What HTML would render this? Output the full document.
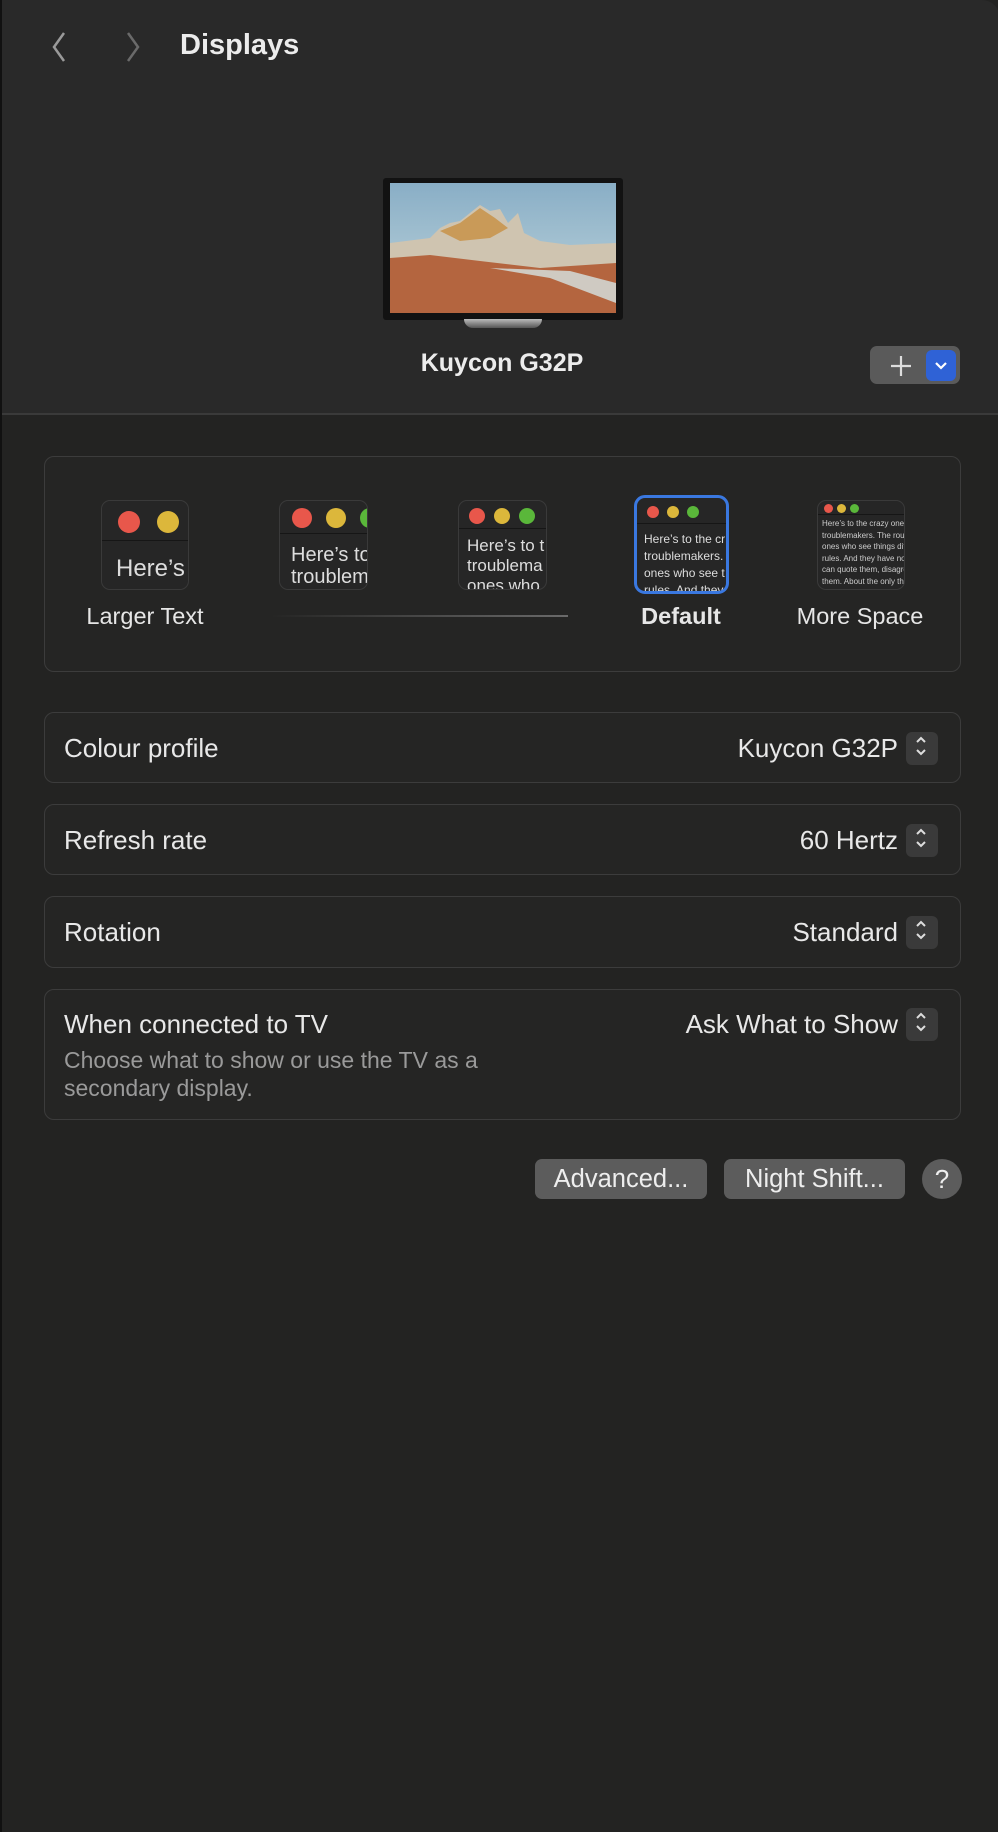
<!DOCTYPE html>
<html><head><meta charset="utf-8"><style>
*{box-sizing:border-box;margin:0;padding:0}
body{width:998px;height:1832px;background:#232322;font-family:"Liberation Sans",sans-serif;color:#e6e6e6;position:relative;overflow:hidden;border-left:2px solid #111}
.hdr{position:absolute;left:0;top:0;width:998px;height:415px;background:#292929;border-bottom:2px solid #3a3a3a;border-top-right-radius:18px}
.abs{position:absolute}
.card{position:absolute;left:42px;width:917px;border:1.5px solid #3c3c3c;border-radius:10px;background:#252524}
.lbl{position:absolute;left:19px;font-size:26px;color:#e8e8e8}
.val{position:absolute;right:62px;font-size:26px;color:#e8e8e8}
.step{position:absolute;right:22px;width:32px;height:33px;background:#3a3a3a;border-radius:6px}
.btn{position:absolute;top:1159px;height:40px;background:#5c5c5c;border-radius:7px;font-size:25.5px;color:#eee;text-align:center;line-height:40px}
.th{position:absolute;background:#262626;border:1px solid #3a3a3a;border-radius:9px;overflow:hidden}
.dot{position:absolute;border-radius:50%}
.tl{position:absolute;font-size:23.5px;color:#e6e6e6;text-align:center;width:180px;top:603px}
</style></head><body>
<div class="hdr"></div>
<svg class="abs" style="left:44px;top:30px" width="100" height="34"><path d="M18 3 L8 17 L18 31" stroke="#9a9a9a" stroke-width="2.5" fill="none"/><path d="M82 3 L92 17 L82 31" stroke="#6a6a6a" stroke-width="2.5" fill="none"/></svg>
<div class="abs" style="left:178px;top:29px;font-size:29px;font-weight:bold;color:#ececec">Displays</div>
<div class="abs" style="left:381px;top:178px;width:240px;height:142px;background:#121212;border-radius:3px"></div>
<svg class="abs" style="left:388px;top:183px" width="226" height="130" viewBox="0 0 226 130">
<defs><linearGradient id="sk" x1="0" y1="0" x2="0" y2="1"><stop offset="0" stop-color="#89aec6"/><stop offset="1" stop-color="#c0d6dc"/></linearGradient></defs>
<rect width="226" height="130" fill="url(#sk)"/>
<path d="M0 60 L40 55 L50 45 L60 40 L70 38 L80 30 L90 22 L100 28 L110 26 L118 40 L128 30 L134 50 L150 58 L180 62 L226 60 L226 130 L0 130 Z" fill="#cfc4b0"/>
<path d="M50 48 L70 40 L90 25 L105 35 L118 45 L100 55 L70 58 Z" fill="#c99a58"/>
<path d="M0 75 L40 72 L90 78 L150 85 L226 80 L226 130 L0 130 Z" fill="#b4653f"/>
<path d="M100 85 L160 95 L226 120 L226 100 L180 88 Z" fill="#cfcac2"/>
</svg>
<div class="abs" style="left:462px;top:319px;width:78px;height:9px;background:linear-gradient(#bbb,#555);border-radius:0 0 40px 40px"></div>
<div class="abs" style="left:380px;top:349px;width:240px;text-align:center;font-size:25px;font-weight:bold;color:#ececec">Kuycon G32P</div>
<div class="abs" style="left:868px;top:346px;width:90px;height:38px;background:#5a5a5a;border-radius:7px"></div>
<svg class="abs" style="left:884px;top:354px" width="30" height="24"><path d="M15 2 V22 M5 12 H25" stroke="#ddd" stroke-width="2.2"/></svg>
<div class="abs" style="left:924px;top:350px;width:30px;height:31px;background:#2f62d6;border-radius:6px"></div>
<svg class="abs" style="left:924px;top:350px" width="30" height="31"><path d="M10 13 L15 18 L20 13" stroke="#fff" stroke-width="2.2" fill="none"/></svg>

<div class="card" style="top:456px;height:216px"></div>
<div class="th" style="left:99px;top:500px;width:88px;height:90px"><div class="abs" style="left:0;top:0;width:88px;height:40px;border-bottom:1px solid #161616"></div><div class="dot" style="left:16px;top:10px;width:22px;height:22px;background:#e8574b"></div><div class="dot" style="left:55px;top:10px;width:22px;height:22px;background:#dcb73b"></div><div class="abs" style="left:14px;top:54px;font-size:24px;color:#ddd;white-space:nowrap">Here’s</div></div>
<div class="th" style="left:277px;top:500px;width:89px;height:90px"><div class="abs" style="left:0;top:0;width:89px;height:33px;border-bottom:1px solid #161616"></div><div class="dot" style="left:12px;top:7px;width:20px;height:20px;background:#e8574b"></div><div class="dot" style="left:46px;top:7px;width:20px;height:20px;background:#dcb73b"></div><div class="dot" style="left:80px;top:7px;width:20px;height:20px;background:#5ab73a"></div><div class="abs" style="left:11px;top:43px;font-size:20px;line-height:22px;color:#ddd;white-space:nowrap">Here’s to<br>troublem</div></div>
<div class="th" style="left:456px;top:500px;width:89px;height:90px"><div class="abs" style="left:0;top:0;width:89px;height:28px;border-bottom:1px solid #161616"></div><div class="dot" style="left:10px;top:7px;width:16px;height:16px;background:#e8574b"></div><div class="dot" style="left:35px;top:7px;width:16px;height:16px;background:#dcb73b"></div><div class="dot" style="left:60px;top:7px;width:16px;height:16px;background:#5ab73a"></div><div class="abs" style="left:8px;top:35px;font-size:17px;line-height:20px;color:#ddd;white-space:nowrap">Here’s to t<br>troublema<br>ones who</div></div>
<div class="th" style="left:632px;top:495px;width:95px;height:99px;border:3px solid #3a78e0;border-radius:11px"><div class="abs" style="left:0;top:0;width:89px;height:26px;border-bottom:1px solid #161616"></div><div class="dot" style="left:10px;top:8px;width:12px;height:12px;background:#e8574b"></div><div class="dot" style="left:30px;top:8px;width:12px;height:12px;background:#dcb73b"></div><div class="dot" style="left:50px;top:8px;width:12px;height:12px;background:#5ab73a"></div><div class="abs" style="left:7px;top:33px;font-size:12px;line-height:17px;color:#ddd;white-space:nowrap">Here’s to the cr<br>troublemakers.<br>ones who see t<br>rules. And they</div></div>
<div class="th" style="left:815px;top:500px;width:88px;height:90px"><div class="abs" style="left:0;top:0;width:88px;height:14px;border-bottom:1px solid #161616"></div><div class="dot" style="left:6px;top:3px;width:9px;height:9px;background:#e8574b"></div><div class="dot" style="left:19px;top:3px;width:9px;height:9px;background:#dcb73b"></div><div class="dot" style="left:32px;top:3px;width:9px;height:9px;background:#5ab73a"></div><div class="abs" style="left:4px;top:17px;font-size:8px;line-height:11.5px;color:#ccc;white-space:nowrap">Here’s to the crazy ones<br>troublemakers. The round<br>ones who see things diffe<br>rules. And they have no<br>can quote them, disagree<br>them. About the only thi<br>Because they change th</div></div>
<div class="abs" style="left:269px;top:615px;width:297px;height:2px;background:linear-gradient(90deg,rgba(120,120,120,0),#6a6a6a)"></div>
<div class="tl" style="left:53px">Larger Text</div>
<div class="tl" style="left:589px;font-weight:bold">Default</div>
<div class="tl" style="left:768px">More Space</div>

<div class="card" style="top:712px;height:71px"><div class="lbl" style="top:20px">Colour profile</div><div class="val" style="top:20px">Kuycon G32P</div><div class="step" style="top:19px"></div></div>
<div class="card" style="top:804px;height:71px"><div class="lbl" style="top:20px">Refresh rate</div><div class="val" style="top:20px">60 Hertz</div><div class="step" style="top:19px"></div></div>
<div class="card" style="top:896px;height:72px"><div class="lbl" style="top:20px">Rotation</div><div class="val" style="top:20px">Standard</div><div class="step" style="top:19px"></div></div>
<div class="card" style="top:989px;height:131px"><div class="lbl" style="top:19px">When connected to TV</div><div class="abs" style="left:19px;top:56px;font-size:23px;line-height:28px;color:#9a9a9a">Choose what to show or use the TV as a<br>secondary display.</div><div class="val" style="top:19px">Ask What to Show</div><div class="step" style="top:18px"></div></div>
<svg class="abs" style="left:903px;top:0" width="34" height="1200">
<g stroke="#ddd" stroke-width="2" fill="none">
<path d="M12 742 L16 738 L20 742 M12 750 L16 754 L20 750"/>
<path d="M12 834 L16 830 L20 834 M12 842 L16 846 L20 842"/>
<path d="M12 926 L16 922 L20 926 M12 934 L16 938 L20 934"/>
<path d="M12 1018 L16 1014 L20 1018 M12 1026 L16 1030 L20 1026"/>
</g></svg>
<div class="btn" style="left:533px;width:172px">Advanced...</div>
<div class="btn" style="left:722px;width:181px">Night Shift...</div>
<div class="abs" style="left:920px;top:1159px;width:40px;height:40px;border-radius:50%;background:#5c5c5c;text-align:center;line-height:40px;font-size:26px;color:#eee">?</div>
</body></html>
